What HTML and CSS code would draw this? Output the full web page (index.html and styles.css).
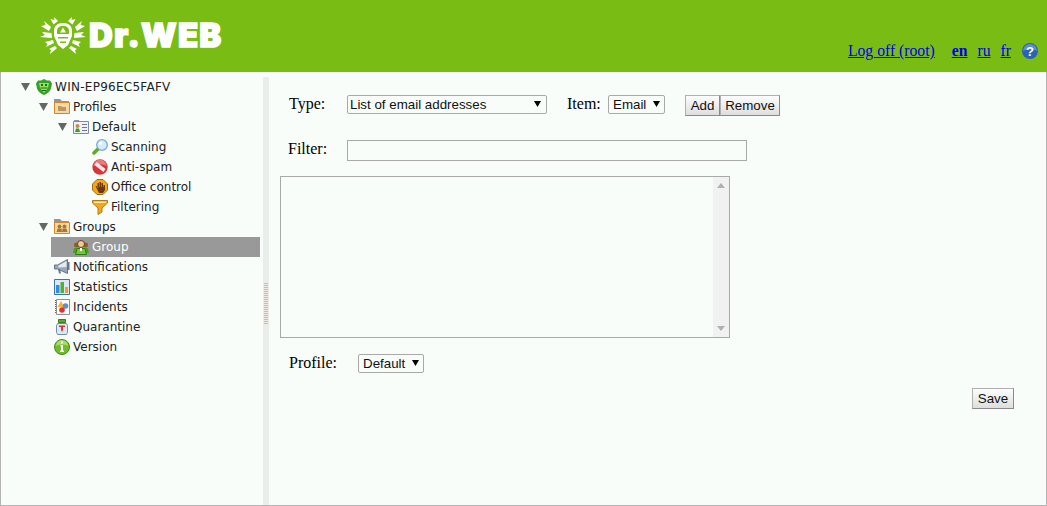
FILE: index.html
```html
<!DOCTYPE html>
<html lang="en">
<head>
  <meta charset="UTF-8" />
  <title>Dr.WEB</title>
  <link rel="stylesheet" href="styles.css">
</head>
<body>
  <div class="page">
    <!-- Header -->
    <header class="header">
      <div class="logo">
        <svg class="logo-mark" width="46" height="38" viewBox="0 0 46 38">
          <path fill="#fff" fill-rule="evenodd" d="M23 6c-6 0-9 3-9 8v5l4 9 5 4 5-4 4-9v-5c0-5-3-8-9-8zM23 9c-4 0-6 2-6 5v3h12v-3c0-3-2-5-6-5zM18 20h10v1.500H18zM20 24.500h6V26h-6z"/>
          <path fill="#fff" d="M23 10.500l-3 5h6zM18 4l-4-4 .5 3-4-1 3 5.500zM28 4l4-4-.5 3 4-1-3 5.500zM11 10L4 4l1.500 4L1 9l8 5zM35 10l7-6-1.500 4 4.500 1-8 5zM11.500 16L2 15l3 3-5 2 12 1zM34.500 16L44 15l-3 3 5 2-12 1zM13 23l-8 2 2.500 2-1.500 3 8-4zM33 23l8 2-2.500 2 1.500 3-8-4zM15 29l-6 3 2 1-1 4 7-6zM31 29l6 3-2 1 1 4-7-6z"/>
        </svg>
        <span class="logo-text">Dr.WEB</span>
      </div>
      <nav class="top-links">
        <a class="logoff" href="#">Log off (root)</a>
        <a class="lang active" href="#">en</a>
        <a class="lang" href="#">ru</a>
        <a class="lang" href="#">fr</a>
        <svg class="help" width="16" height="16" viewBox="0 0 16 16">
          <circle cx="8" cy="8" r="8" fill="#2c62b4"/>
          <path fill="#5c8fd0" d="M1 8a7 7 0 0 1 14 0c-3-2-10-2-14 0z"/>
          <text x="8" y="12.500" text-anchor="middle" class="help-mark">?</text>
        </svg>
      </nav>
    </header>

    <div class="main">
      <!-- Tree -->
      <aside class="sidebar">
        <div class="row level-0">
          <span class="arrow"></span>
          <svg class="icon" viewBox="0 0 16 16"><path fill="#35a02a" d="M8 0l3 1.500h3l2 3-1 5c-1 3-4 5.500-7 6.500-3-1-6-3.500-7-6.500l-1-5 2-3h3z"/><path fill="#9ae05a" d="M3 4h10l-1 5-4 5-4-5z"/><path fill="#14701a" d="M5 5h2v2H5zM9 5h2v2H9zM4.500 8.500h7v1h-7zM6 11h4v1H6z"/></svg>
          <span class="label root-label">WIN-EP96EC5FAFV</span>
        </div>
        <div class="row level-1">
          <span class="arrow"></span>
          <svg class="icon" viewBox="0 0 16 16"><path fill="#8a97ad" d="M0 0h6l2 2h7v4H0z"/><path fill="#f8d8a0" stroke="#d0882a" d="M.5 3.500h15v11H.5z"/><path fill="#b89868" d="M4 7h3l1 1h4v4H4z"/></svg>
          <span class="label">Profiles</span>
        </div>
        <div class="row level-2">
          <span class="arrow"></span>
          <svg class="icon" viewBox="0 0 16 16"><path fill="#8a97ad" d="M1 1h5l1 2H1z"/><path fill="#eef2f8" stroke="#7f8ca6" d="M.5 2.500h15v12H.5z"/><circle cx="4.500" cy="7" r="2" fill="#c98a50"/><path fill="#3e9d25" d="M2 13l1-3.500h3L7 13z"/><path fill="#6a7892" d="M9 5h5v1H9zM9 8h5v1H9zM9 11h5v1H9z"/></svg>
          <span class="label">Default</span>
        </div>
        <div class="row level-3">
          <svg class="icon" viewBox="0 0 16 16"><path stroke="#62a82a" stroke-width="3.500" stroke-linecap="round" d="M2 14l4-4"/><circle cx="10" cy="6" r="5.300" fill="#d6ecfb" stroke="#7aa8d8" stroke-width="1.300"/><path fill="#fff" d="M6.500 5.500a3.500 3.500 0 0 1 3.500-3v3z"/></svg>
          <span class="label">Scanning</span>
        </div>
        <div class="row level-3">
          <svg class="icon" viewBox="0 0 16 16"><circle cx="8" cy="8" r="7.700" fill="#d8343a"/><path fill="#e8797c" d="M1.500 7a6.500 6.500 0 0 1 13 0c-3-2-10-2-13 0z"/><path stroke="#fbe8e8" stroke-width="3.500" d="M3.500 4.500l9 7"/></svg>
          <span class="label">Anti-spam</span>
        </div>
        <div class="row level-3">
          <svg class="icon" viewBox="0 0 16 16"><path fill="#f4a814" stroke="#a06c10" d="M5 .5h6L15.500 5v6L11 15.500H5L.5 11V5z"/><path fill="#6e3810" d="M3.500 7H5v2h.5V4H7v4h.5V3H9v5h.5V4H11v4h.5V6H13v5l-2 3H7z"/></svg>
          <span class="label">Office control</span>
        </div>
        <div class="row level-3">
          <svg class="icon" viewBox="0 0 16 16"><path fill="#f2a81c" stroke="#b67a12" d="M.5 1.500h15V4L10 9v4l-4 2.500V9L.5 4z"/><path fill="#ffe9a0" d="M2 2.500h12V4H2z"/></svg>
          <span class="label">Filtering</span>
        </div>
        <div class="row level-1">
          <span class="arrow"></span>
          <svg class="icon" viewBox="0 0 16 16"><path fill="#8a97ad" d="M0 0h6l2 2h7v4H0z"/><path fill="#f8d8a0" stroke="#d0882a" d="M.5 3.500h15v11H.5z"/><circle cx="5.500" cy="7.500" r="2" fill="#a5793a"/><circle cx="10.500" cy="7.500" r="2" fill="#a5793a"/><path fill="#a5793a" d="M2.500 13l1-3.500h4L8 13zM8 13l.500-3.500h4l1 3.500z"/></svg>
          <span class="label">Groups</span>
        </div>
        <div class="row level-2 selected">
          <svg class="icon" viewBox="0 0 16 16"><circle cx="3.500" cy="6" r="2.500" fill="#8a5f2a"/><circle cx="12.500" cy="6" r="2.500" fill="#8a5f2a"/><path fill="#4f9c28" d="M0 14l1-5h5l1 5zM9 14l1-5h5l1 5z"/><circle cx="8" cy="5" r="3.500" fill="#f0c89a" stroke="#6a4018"/><path fill="#74c838" stroke="#2f7a14" d="M2.500 15.500l1.500-6h8l1.500 6z"/><path fill="#fff" d="M7 9h2v3H7z"/></svg>
          <span class="label">Group</span>
        </div>
        <div class="row level-1">
          <svg class="icon" viewBox="0 0 16 16"><path fill="#9aa6b8" stroke="#68768c" d="M.5 6h3l10-5.500v14L3.500 10h-3z"/><path fill="#e6eaf0" d="M4.500 6.500l8-4.500v6l-8 .5z"/><path fill="#68768c" d="M14 3h1.500v8H14zM4 10h2l1 4.500H5z"/></svg>
          <span class="label">Notifications</span>
        </div>
        <div class="row level-1">
          <svg class="icon" viewBox="0 0 16 16"><path fill="#dce8f8" stroke="#3f73b0" d="M.5.500h15v15H.5z"/><path fill="#2f8fd8" d="M2 6h3.500v8H2z"/><path fill="#52b030" d="M6.500 3H10v11H6.500z"/><path fill="#f0a020" d="M11 8h3v6h-3z"/></svg>
          <span class="label">Statistics</span>
        </div>
        <div class="row level-1">
          <svg class="icon" viewBox="0 0 16 16"><path fill="#fbfbfb" stroke="#8f8f8f" d="M2.500.5h13v15h-13z"/><path stroke="#666" stroke-dasharray="1 1" d="M1.500 1v14"/><path fill="#f2b632" d="M7 2l3.500 6h-7z"/><circle cx="11.500" cy="7" r="2.800" fill="#5f8fd0"/><circle cx="8" cy="11" r="2.800" fill="#d8343a"/></svg>
          <span class="label">Incidents</span>
        </div>
        <div class="row level-1">
          <svg class="icon" viewBox="0 0 16 16"><path fill="#5aa82c" stroke="#3d7d18" d="M4.500.5h7v3h-7z"/><path fill="#dce8f4" stroke="#6f8fb0" d="M3.500 4.500h9l1 2v7l-1 2h-9l-1-2v-7z"/><path fill="#d8343a" d="M5 6.500h6V8H9v3l-1 2-1-2V8H5z"/></svg>
          <span class="label">Quarantine</span>
        </div>
        <div class="row level-1">
          <svg class="icon" viewBox="0 0 16 16"><circle cx="8" cy="8" r="7.500" fill="#72bc2c" stroke="#4a8a18"/><path fill="#a8dc70" d="M2 7a6 6 0 0 1 12 0c-3-2-9-2-12 0z"/><path fill="#fff" d="M7 2.500h2v2H7zM6.500 6H9v5.500h1V13H6v-1.500h1v-4h-.5z"/></svg>
          <span class="label">Version</span>
        </div>
      </aside>

      <div class="splitter"><div class="grip"></div></div>

      <!-- Form -->
      <section class="content">
        <div class="type-row">
          <label class="type-label">Type:</label>
          <div class="select select-type">
            <select><option>List of email addresses</option></select>
          </div>
          <label class="item-label">Item:</label>
          <div class="select select-item">
            <select><option>Email</option></select>
          </div>
          <div class="btn-group">
            <button>Add</button><button>Remove</button>
          </div>
        </div>
        <div class="filter-row">
          <label class="filter-label">Filter:</label>
          <input class="filter-input" type="text">
        </div>
        <div class="listbox">
          <div class="scrollbar">
            <span class="scroll-up"></span>
            <span class="scroll-down"></span>
          </div>
        </div>
        <div class="profile-row">
          <label class="profile-label">Profile:</label>
          <div class="select select-profile">
            <select><option>Default</option></select>
          </div>
        </div>
        <div class="save-row">
          <button>Save</button>
        </div>
      </section>
    </div>
  </div>
</body>
</html>
```

FILE: styles.css
```css
html, body {
  margin: 0;
  padding: 0;
  height: 100%;
}
body {
  background-color: #f8fdfa;
  font-family: 'Liberation Serif', serif;
  color: #000;
  overflow: hidden;
}
.page {
  height: 506px;
  box-sizing: border-box;
  border: 1px solid #b4b4b4;
  border-top: none;
  display: flex;
  flex-direction: column;
}
/* Header */
.header {
  height: 72px;
  background: #78bc14;
  display: flex;
  justify-content: space-between;
  margin: 0 -1px;
  flex: none;
}
.logo {
  display: flex;
  align-items: flex-start;
  padding: 17px 0 0 40px;
}
.logo-mark {
  display: block;
}
.logo-text {
  margin: 0 0 0 3px;
  font-family: 'Inter', 'DejaVu Sans', sans-serif;
  font-weight: 900;
  font-size: 33px;
  line-height: 36px;
  color: #fff;
  letter-spacing: 1.200px;
  -webkit-text-stroke: 1.400px #fff;
}
.top-links {
  display: flex;
  align-items: center;
  height: 16px;
  margin-top: 43px;
  padding-right: 9px;
  font-size: 15.700px;
}
.top-links a {
  color: #0000ee;
}
.logoff {
  margin-right: 17px;
}
.lang {
  margin-right: 10px;
}
.lang.active {
  font-weight: bold;
}
.help {
  margin-left: 1px;
}
.help-mark {
  font-family: 'Liberation Sans', sans-serif;
  font-weight: bold;
  font-size: 13px;
  fill: #fff;
}
/* Tree */
.main {
  flex: 1;
  display: flex;
  min-height: 0;
}
.sidebar {
  width: 262px;
  padding-top: 5px;
  box-sizing: border-box;
  flex: none;
  font-family: 'DejaVu Sans', sans-serif;
  font-size: 12px;
  color: #222;
}
.row {
  height: 20px;
  display: flex;
  align-items: center;
  margin-right: 3px;
}
.level-0 { padding-left: 35px; }
.level-1 { padding-left: 53px; }
.level-2 { padding-left: 72px; }
.level-3 { padding-left: 91px; }
.icon {
  width: 16px;
  height: 16px;
  flex: none;
  margin-right: 3px;
}
.root-label {
  letter-spacing: .27px;
}
.arrow {
  width: 9px;
  height: 8px;
  margin-left: -15px;
  margin-right: 6px;
  background: #666;
  clip-path: polygon(0 0, 100% 0, 50% 100%);
}
.selected {
  background: #999;
  color: #fff;
  margin-left: 50px;
  padding-left: 22px;
}
.splitter {
  width: 6px;
  background: #e9eeeb;
  flex: none;
  margin-top: 5px;
  padding-top: 206px;
  box-sizing: border-box;
}
.grip {
  width: 4px;
  height: 42px;
  margin-left: 1px;
  background: repeating-linear-gradient(#c8bdb0 0 1px, #efeae4 1px 2px);
}
/* Form */
.content {
  flex: 1;
  min-width: 0;
  padding: 23px 32px 0 11px;
  font-size: 16px;
}
.type-row {
  display: flex;
  align-items: flex-start;
  padding-left: 9px;
  height: 45px;
}
.type-label, .item-label, .filter-label, .profile-label {
  line-height: 17px;
}
.type-label {
  width: 58px;
}
.item-label {
  margin-left: 20px;
  width: 41px;
}
.select {
  position: relative;
  height: 19px;
  flex: none;
}
.select::after {
  content: "";
  position: absolute;
  top: 6px;
  right: 5px;
  width: 7px;
  height: 6px;
  background: #000;
  clip-path: polygon(0 0, 100% 0, 50% 100%);
  pointer-events: none;
}
.select select {
  appearance: none;
  display: block;
  width: 100%;
  height: 19px;
  box-sizing: border-box;
  margin: 0;
  padding: 0 0 0 4px;
  background: #f8fdfa;
  border: 1px solid #a9a9a9;
  border-radius: 2px;
  font-family: 'Liberation Sans', sans-serif;
  font-size: 13.330px;
  color: #111;
}
.select-type { width: 200px; }
.select-type select { padding-left: 2px; }
.select-type::after { right: 6px; }
.select-item { width: 57px; }
.select-profile { width: 66px; }
button {
  height: 21px;
  box-sizing: border-box;
  margin: 0;
  padding: 0 5px;
  background: linear-gradient(#fdfdfd, #dedede);
  border: 1px solid #b0b0b0;
  border-right-color: #8a8a8a;
  border-bottom-color: #8a8a8a;
  font-family: 'Liberation Sans', sans-serif;
  font-size: 13.330px;
  color: #111;
}
.btn-group {
  margin-left: 20px;
  display: flex;
}
.btn-group button {
  width: 35px;
  padding: 0;
}
.btn-group button + button {
  width: 60px;
}
.filter-row {
  display: flex;
  align-items: center;
  height: 21px;
  padding-left: 8px;
}
.filter-label {
  width: 59px;
  position: relative;
  top: -2px;
}
.filter-input {
  width: 400px;
  height: 21px;
  box-sizing: border-box;
  margin: 0;
  background: #f8fdfa;
  border: 1px solid #a9a9a9;
  padding: 0 4px;
}
.listbox {
  width: 450px;
  height: 162px;
  box-sizing: border-box;
  margin-top: 15px;
  border: 1px solid #a9a9a9;
  display: flex;
  justify-content: flex-end;
}
.scrollbar {
  width: 16px;
  background: #f1f1f1;
  display: flex;
  flex-direction: column;
  justify-content: space-between;
  align-items: center;
  padding: 6px 0;
}
.scroll-up, .scroll-down {
  width: 0;
  height: 0;
  border-left: 4px solid transparent;
  border-right: 4px solid transparent;
}
.scroll-up { border-bottom: 5px solid #b0b0b0; }
.scroll-down { border-top: 5px solid #b0b0b0; }
.profile-row {
  display: flex;
  align-items: flex-start;
  height: 19px;
  margin-top: 16px;
  padding-left: 9px;
}
.profile-label {
  width: 69px;
}
.save-row {
  display: flex;
  justify-content: flex-end;
  margin-top: 15px;
}
.save-row button {
  width: 42px;
  padding: 0;
}
```
